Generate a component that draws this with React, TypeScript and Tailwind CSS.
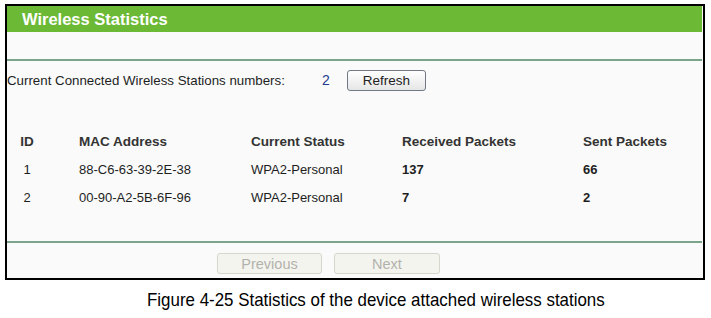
const stations = [
  { id: 1, mac: "88-C6-63-39-2E-38", status: "WPA2-Personal", rx: "137", tx: "66" },
  { id: 2, mac: "00-90-A2-5B-6F-96", status: "WPA2-Personal", rx: "7", tx: "2" },
];

function Row({ cells, head }: { cells: (string | number)[]; head?: boolean }) {
  return (
    <div
      className={`flex h-[28px] items-center ${
        head ? "text-[13.5px] font-bold text-[#333]" : "text-[13px] text-[#1e1e1e]"
      }`}
    >
      <div className="w-[72px]">
        <div className="w-[40px] text-center">{cells[0]}</div>
      </div>
      <div className="w-[172px]">{cells[1]}</div>
      <div className="w-[151px]">{cells[2]}</div>
      <div className={`w-[181px] ${head ? "" : "font-bold"}`}>{cells[3]}</div>
      <div className={head ? "" : "font-bold"}>{cells[4]}</div>
    </div>
  );
}

export default function App() {
  return (
    <div className="w-[711px] h-[318px] bg-white pt-[4px] pl-[5px] font-['Liberation_Sans',Arial,sans-serif]">
      {/* panel */}
      <div className="w-[700px] h-[276px] border-2 border-black bg-[#f9faf9] flex flex-col">
        <div className="h-[26px] mr-px bg-[#6bb934] flex items-center pl-[15px]">
          <span className="text-white font-bold text-[16.5px]">Wireless Statistics</span>
        </div>
        <div className="h-[27px]" />
        <div className="h-[2px] mr-px bg-[#7aa58b]" />

        <div className="mt-[9px] h-[21px] flex items-center text-[13.3px] text-[#1e1e1e]">
          <span className="w-[315px]">Current Connected Wireless Stations numbers:</span>
          <span className="w-[25px] text-[#1f3c8c] text-[14px]">2</span>
          <button className="w-[79px] h-[21px] rounded-[3px] border border-[#6f7a86] bg-gradient-to-b from-white to-[#e6e6e6] text-[13.5px] text-[#222]">
            Refresh
          </button>
        </div>

        <div className="mt-[37px]">
          <Row head cells={["ID", "MAC Address", "Current Status", "Received Packets", "Sent Packets"]} />
          {stations.map((s) => (
            <Row key={s.id} cells={[s.id, s.mac, s.status, s.rx, s.tx]} />
          ))}
        </div>

        <div className="mt-[29px] h-[2px] mr-px bg-[#7aa58b]" />

        <div className="mt-[10px] flex gap-[12px] pl-[210px]">
          <button className="w-[105px] h-[21px] rounded-[3px] border border-[#d6d6cc] bg-[#f4f4ef] text-[14.5px] text-[#b2b2ac]">
            Previous
          </button>
          <button className="w-[106px] h-[21px] rounded-[3px] border border-[#d6d6cc] bg-[#f4f4ef] text-[14.5px] text-[#b2b2ac]">
            Next
          </button>
        </div>
      </div>

      <p className="mt-[9px] ml-[142px] origin-left scale-x-[0.89] whitespace-nowrap text-[19px] leading-[22px] text-black">
        Figure 4-25 Statistics of the device attached wireless stations
      </p>
    </div>
  );
}
